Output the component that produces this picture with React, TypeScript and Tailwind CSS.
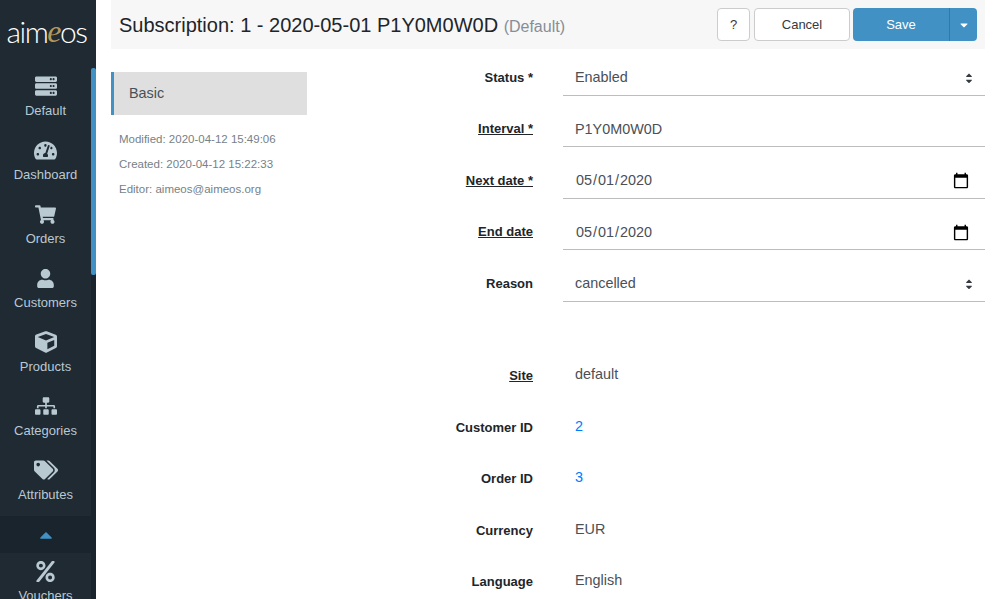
import React from "react";
import { FaServer, FaTachometerAlt, FaShoppingCart, FaUser, FaSitemap, FaTags, FaPercent, FaCaretUp, FaCaretDown, FaCube } from "react-icons/fa";

const navItems = [
  { label: "Default", icon: <FaServer className="w-[22px] h-[22px]" /> },
  { label: "Dashboard", icon: <FaTachometerAlt className="w-[23px] h-[23px]" /> },
  { label: "Orders", icon: <FaShoppingCart className="w-[21px] h-[21px]" /> },
  { label: "Customers", icon: <FaUser className="w-[19px] h-[19px]" /> },
  { label: "Products", icon: <FaCube className="w-[22px] h-[22px]" /> },
  { label: "Categories", icon: <FaSitemap className="w-[22px] h-[22px]" /> },
  { label: "Attributes", icon: <FaTags className="w-[24px] h-[24px]" /> },
];

function NavItem({ label, icon }: { label: string; icon: React.ReactNode }) {
  return (
    <div className="h-[64px] shrink-0 flex flex-col items-center pt-[6px] text-[#b9c9d2]">
      <div className="h-[24px] flex items-center justify-center">{icon}</div>
      <div className="text-[13px] leading-[20px] mt-[3px]">{label}</div>
    </div>
  );
}

function SelectCaret() {
  return (
    <span className="flex flex-col items-center text-[#343a40] -mr-[1px]">
      <FaCaretUp className="w-[10px] h-[10px] -mb-[4px]" />
      <FaCaretDown className="w-[10px] h-[10px]" />
    </span>
  );
}

function Row({ label, underline, height, children }: { label: string; underline?: boolean; height: string; children: React.ReactNode }) {
  return (
    <div className={`flex items-center ${height}`}>
      <label className={`w-[226px] text-right text-[13px] font-bold text-[#212529] ${underline ? "underline" : ""}`}>{label}</label>
      <div className="flex-1 ml-[30px]">{children}</div>
    </div>
  );
}

function StaticRow({ label, value, underline, link }: { label: string; value: string; underline?: boolean; link?: boolean }) {
  return (
    <Row label={label} underline={underline} height="h-[37px] mb-[14.5px]">
      <div className={`px-[12px] -mt-[1.6px] text-[14.4px] ${link ? "text-[#007bff]" : "text-[#495057]"}`}>{value}</div>
    </Row>
  );
}

const selectClass = "w-full h-[36px] px-[12px] pt-[2px] flex items-center justify-between border-b border-[#bdbdbd] text-[14.4px] text-[#495057] bg-white";
const inputClass = "block w-full h-[36px] px-[12px] border-b border-[#bdbdbd] text-[14.4px] text-[#495057] bg-white outline-none";
const dateClass = "[&::-webkit-calendar-picker-indicator]:w-[18px] [&::-webkit-calendar-picker-indicator]:h-[18px] [&::-webkit-calendar-picker-indicator]:p-0 [&::-webkit-calendar-picker-indicator]:mr-[3px]";

export default function App() {
  const noop = () => {};
  return (
    <div className="flex w-[1000px] h-[599px] overflow-hidden bg-white font-['Liberation_Sans',Arial,sans-serif]">
      {/* sidebar */}
      <aside className="w-[96px] shrink-0 flex bg-[#1f2a33]">
        <div className="w-[91px] shrink-0 flex flex-col">
          <div className="h-[68px] shrink-0 flex items-start justify-center pt-[13px] pl-[2px] font-['Lato',sans-serif] font-light text-[30px] leading-[36px] tracking-[-1.5px] text-white">
            <span>aim</span>
            <span className="font-['Liberation_Serif',serif] italic text-[32px] text-[#b8975a]">e</span>
            <span>os</span>
          </div>
          {navItems.map((item) => (
            <NavItem key={item.label} label={item.label} icon={item.icon} />
          ))}
          <div className="h-[37px] shrink-0 flex items-center justify-center bg-[#1a242c] text-[#4191c4]">
            <FaCaretUp className="w-[20px] h-[20px]" />
          </div>
          <NavItem label="Vouchers" icon={<FaPercent className="w-[21px] h-[21px]" />} />
        </div>
        <div className="w-[5px] shrink-0 pt-[68px]">
          <div className="h-full bg-[#1a242c]">
            <div className="h-[207px] bg-[#4191c4] rounded-t-[2px] rounded-b-[2px]" />
          </div>
        </div>
      </aside>

      {/* main */}
      <main className="flex-1 min-w-0 pl-[15px] pr-[15px]">
        <header className="h-[49px] flex items-center justify-between bg-[#f7f7f7] pl-[8px] pr-[8px]">
          <h1 className="text-[20px] leading-[24px] pt-[2px] text-[#212529] whitespace-nowrap">
            Subscription: 1 - 2020-05-01 P1Y0M0W0D <span className="text-[16px] text-[#868e96]">(Default)</span>
          </h1>
          <div className="flex items-center gap-[4px] text-[13px]">
            <button className="w-[33px] h-[33px] rounded-[4px] border border-[#cccccc] bg-white text-[#343a40]">?</button>
            <button className="w-[96px] h-[33px] rounded-[4px] border border-[#cccccc] bg-white text-[#343a40]">Cancel</button>
            <div className="flex h-[33px] -ml-[1px] rounded-[4px] bg-[#4191c4] text-white">
              <button className="w-[97px] border-r border-[#2f7bab]">Save</button>
              <button className="w-[27px] flex items-center justify-center">
                <FaCaretDown className="w-[12px] h-[12px]" />
              </button>
            </div>
          </div>
        </header>

        <div className="flex">
          {/* left nav */}
          <div className="w-[196px] shrink-0 pt-[23px]">
            <div className="h-[43px] flex items-center bg-[#dfdfdf] border-l-[3px] border-[#4191c4] pl-[15px] text-[14.4px] text-[#495057]">Basic</div>
            <div className="mt-[12px] pl-[8px] text-[11.5px] leading-[25px] text-[#777f87]">
              <div>Modified: 2020-04-12 15:49:06</div>
              <div>Created: 2020-04-12 15:22:33</div>
              <div>Editor: aimeos@aimeos.org</div>
            </div>
          </div>

          {/* form */}
          <div className="flex-1 min-w-0 pt-[10px]">
            <Row label="Status *" height="h-[37px] mb-[14px]">
              <div className={selectClass}>
                <span>Enabled</span>
                <SelectCaret />
              </div>
            </Row>
            <Row label="Interval *" underline height="h-[37px] mb-[15px]">
              <input className={`${inputClass} pt-[2px]`} value="P1Y0M0W0D" onChange={noop} />
            </Row>
            <Row label="Next date *" underline height="h-[37px] mb-[14px]">
              <input type="date" className={`${inputClass} ${dateClass} pt-[2px]`} value="2020-05-01" onChange={noop} />
            </Row>
            <Row label="End date" underline height="h-[37px] mb-[15px]">
              <input type="date" className={`${inputClass} ${dateClass} pt-[4px]`} value="2020-05-01" onChange={noop} />
            </Row>
            <Row label="Reason" height="h-[37px] mb-[55.3px]">
              <div className={selectClass}>
                <span>cancelled</span>
                <SelectCaret />
              </div>
            </Row>
            <StaticRow label="Site" underline value="default" />
            <StaticRow label="Customer ID" value="2" link />
            <StaticRow label="Order ID" value="3" link />
            <StaticRow label="Currency" value="EUR" />
            <StaticRow label="Language" value="English" />
          </div>
        </div>
      </main>
    </div>
  );
}
